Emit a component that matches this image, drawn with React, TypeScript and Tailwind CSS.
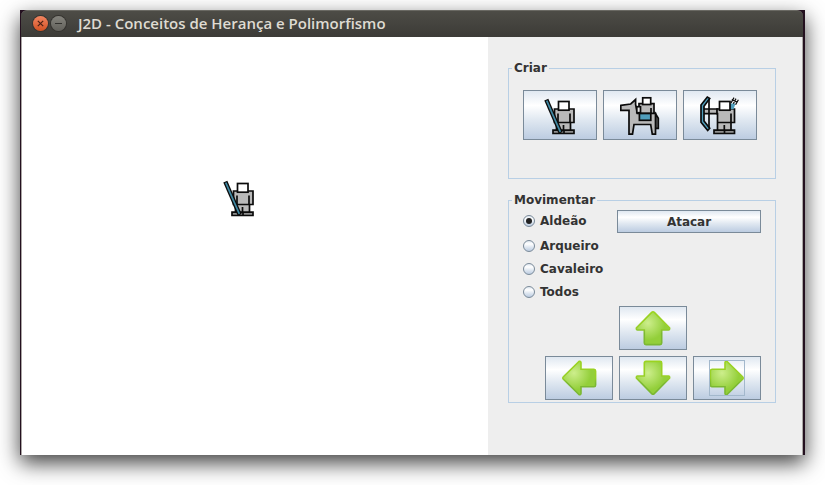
import { useState } from "react";
import type { ReactNode } from "react";

const INK = "#0b0b0b";
const BODY = "#b9b9b9";
const BLUE = "#4f9dbb";

function VillagerSprite() {
  return (
    <svg className="h-10 w-10" viewBox="0 0 40 40" stroke={INK} strokeWidth="1.7" aria-hidden="true">
      <path d="M14.5 14H34V27.5H30.5V36H16.5V27.5H14.5Z" fill={BODY} />
      <path d="M18 18.5V27.5M30 18.5V27.5M16.5 27.5H30.5M23.5 30V36" fill="none" />
      <path d="M13 35.2H34V38.5H13ZM24 35V38.5" fill="#8f8f8f" />
      <rect x="18.5" y="6.5" width="10.5" height="8.7" fill="#fff" />
      <path d="M6.3 4.7L20.7 37.8" fill="none" strokeWidth="4.4" />
      <path d="M6.7 5.6L20.3 36.8" fill="none" stroke="#3f88a3" strokeWidth="1.7" />
    </svg>
  );
}

function KnightSprite() {
  return (
    <svg className="h-10 w-10" viewBox="0 0 40 40" stroke={INK} strokeWidth="1.7" aria-hidden="true">
      <path d="M35.5 18.7L38.3 23.3V33.3H35.5Z" fill="#777" />
      <path d="M19 8.7H34V19H19Z" fill={BODY} />
      <path
        d="M.8 10.4L10.7 9L15.6 4.5V9.5L17.3 18.3H35.5V39.2H32.3L30.7 29.5H14L12.5 39.2H9V15.3H.8Z"
        fill={BODY}
      />
      <path d="M31 13V18.5" fill="none" />
      <rect x="16.8" y="11.7" width="3.7" height="6" fill="#e8e8e8" />
      <rect x="19.4" y="18.5" width="11.4" height="6.8" fill={BLUE} />
      <rect x="22.7" y="2.8" width="8" height="6.7" fill="#fff" />
    </svg>
  );
}

function ArcherSprite() {
  return (
    <svg className="h-10 w-10" viewBox="0 0 40 40" stroke={INK} strokeWidth="1.7" aria-hidden="true">
      <path d="M2.5 14H17.5V18.7H2.5Z" fill={BODY} />
      <path d="M17 14H34.5V27.5H31V36H17.5V18.7H17Z" fill={BODY} />
      <path d="M17.5 27.5H31M31 18.5V27.5M24.3 30V36" fill="none" />
      <path d="M14 35.2H34.5V38.5H14ZM24.5 35V38.5" fill="#8f8f8f" />
      <path d="M30 8.5H35.5L33.5 14.2H30Z" fill={BLUE} stroke="none" />
      <path d="M31 8L34 2.6M33.3 8.8L36 3.6M35.6 9.8L38.4 4.8M31.8 4.4L37.5 7.6" fill="none" strokeWidth="1.2" />
      <rect x="19.5" y="6.5" width="10.5" height="8.7" fill="#fff" />
      <path d="M9 3V34" fill="none" />
      <path d="M9.7 3.5L7.3 2L1 10V27.3L7.7 35.5L9.7 33.3L4 26V11.3Z" fill={BLUE} />
    </svg>
  );
}

const ARROWS = {
  up: "M18 1.8Q18.7 1.8 19.3 2.4L34.6 18Q35 19.8 33.4 20H26.7V33Q26.7 34.6 25 34.6H11Q9.3 34.6 9.3 33V20H2.6Q1 19.8 1.4 18L16.7 2.4Q17.3 1.8 18 1.8Z",
  down: "M18 34.2Q17.3 34.2 16.7 33.6L1.4 18Q1 16.2 2.6 16H9.3V3Q9.3 1.4 11 1.4H25Q26.7 1.4 26.7 3V16H33.4Q35 16.2 34.6 18L19.3 33.6Q18.7 34.2 18 34.2Z",
  left: "M1.8 18Q1.8 17.3 2.4 16.7L18 1.4Q19.8 1 20 2.6V9.3H33Q34.6 9.3 34.6 11V25Q34.6 26.7 33 26.7H20V33.4Q19.8 35 18 34.6L2.4 19.3Q1.8 18.7 1.8 18Z",
  right:
    "M34.2 18Q34.2 18.7 33.6 19.3L18 34.6Q16.2 35 16 33.4V26.7H3Q1.4 26.7 1.4 25V11Q1.4 9.3 3 9.3H16V2.6Q16.2 1 18 1.4L33.6 16.7Q34.2 17.3 34.2 18Z",
};

type Direction = keyof typeof ARROWS;

function ArrowIcon({ direction }: { direction: Direction }) {
  const fill = `fill-${direction}`;
  const edge = `edge-${direction}`;
  return (
    <svg className="h-9 w-9" viewBox="0 0 36 36" aria-hidden="true">
      <defs>
        <radialGradient id={fill} gradientUnits="userSpaceOnUse" cx="13" cy="13" r="17">
          <stop offset="0" stopColor="#cdee8c" />
          <stop offset="1" stopColor="#93cf3a" />
        </radialGradient>
        <linearGradient id={edge} gradientUnits="userSpaceOnUse" x1="0" y1="0" x2="0" y2="36">
          <stop offset="0" stopColor="#9bd41f" />
          <stop offset="0.5" stopColor="#98cf28" />
          <stop offset="0.65" stopColor="#7bb833" />
          <stop offset="1" stopColor="#7bb833" />
        </linearGradient>
      </defs>
      <path d={ARROWS[direction]} fill={`url(#${fill})`} stroke={`url(#${edge})`} strokeWidth="1.6" />
    </svg>
  );
}

const BEVEL =
  "flex items-center justify-center border border-[#7a8a99] bg-[linear-gradient(#e0e8f1,#ffffff_30%,#e0e8f1_60%,#bccce1)] outline-none";

function CreateButton({ label, children }: { label: string; children: ReactNode }) {
  return (
    <button type="button" aria-label={label} className={`${BEVEL} h-[50px] w-[74px]`}>
      {children}
    </button>
  );
}

function MoveButton({ label, direction, className = "" }: { label: string; direction: Direction; className?: string }) {
  return (
    <button type="button" aria-label={label} className={`${BEVEL} h-11 w-[68px] ${className}`}>
      <span className={direction === "right" ? "outline outline-1 -outline-offset-1 outline-[#a3b8cc]" : ""}>
        <ArrowIcon direction={direction} />
      </span>
    </button>
  );
}

function UnitRadio({ label, checked, onSelect }: { label: string; checked: boolean; onSelect: () => void }) {
  return (
    <label className="flex h-[23px] items-center gap-[5px] pb-0.5">
      <input
        type="radio"
        name="unit"
        checked={checked}
        onChange={onSelect}
        className="grid h-3 w-3 appearance-none place-items-center rounded-full border border-[#7a8a99] bg-[linear-gradient(#e0e8f1,#ffffff_30%,#e0e8f1_60%,#bccce1)] before:h-1.5 before:w-1.5 before:rounded-full checked:before:bg-[#222]"
      />
      {label}
    </label>
  );
}

export default function App() {
  const [unit, setUnit] = useState("Aldeão");

  return (
    <div className="flex min-h-screen flex-col bg-white px-5 pt-2.5 pb-[30px]">
      <div className="flex flex-1 flex-col border-r-2 border-l border-[#24101f] bg-[#24101f] shadow-[0_8px_20px_rgba(0,0,0,0.75)]">
        <header className="flex h-[27px] items-center rounded-t-md border-t border-[#6a6963] bg-linear-to-b from-[#4d4c46] to-[#3c3b37] pb-0.5 pl-3">
          <div className="flex gap-[3px]">
            <button
              type="button"
              aria-label="Fechar"
              className="flex h-[15px] w-[15px] items-center justify-center rounded-full bg-linear-to-b from-[#f18560] to-[#d1501f] ring-1 ring-[#35332f]"
            >
              <svg className="h-[7px] w-[7px]" viewBox="0 0 7 7" stroke="#4a2014" strokeWidth="1.2" aria-hidden="true">
                <path d="M.8 .8L6.2 6.2M6.2 .8L.8 6.2" />
              </svg>
            </button>
            <button
              type="button"
              aria-label="Minimizar"
              className="flex h-[15px] w-[15px] items-center justify-center rounded-full bg-linear-to-b from-[#85847d] to-[#62615b] ring-1 ring-[#35332f]"
            >
              <span className="h-px w-[7px] bg-[#33322e]" />
            </button>
          </div>
          <h1 className="ml-3 font-['Open_Sans',sans-serif] text-[15px] leading-5 font-semibold whitespace-nowrap text-[#dfdbd2]">
            J2D - Conceitos de Herança e Polimorfismo
          </h1>
        </header>

        <div className="flex flex-1 border-x border-[#aaa6a4]">
          <main className="relative flex-1 bg-white">
            <div className="absolute top-[140px] left-[197px]">
              <VillagerSprite />
            </div>
          </main>

          <aside className="flex w-[314px] flex-col gap-3.5 bg-[#eeeeee] pt-6 pr-[26px] pl-5 font-['DejaVu_Sans',sans-serif] text-xs font-bold text-[#333]">
            <fieldset className="border border-[#b8cfe5] px-3.5 pt-3.5 pb-[38px]">
              <legend className="-ml-[11px] px-0.5 leading-[15px]">Criar</legend>
              <div className="flex gap-1.5">
                <CreateButton label="Criar aldeão">
                  <VillagerSprite />
                </CreateButton>
                <CreateButton label="Criar cavaleiro">
                  <KnightSprite />
                </CreateButton>
                <CreateButton label="Criar arqueiro">
                  <ArcherSprite />
                </CreateButton>
              </div>
            </fieldset>

            <fieldset className="border border-[#b8cfe5] px-3.5 py-0.5">
              <legend className="-ml-[11px] px-0.5 leading-[15px]">Movimentar</legend>
              <div className="mb-0.5 flex items-center justify-between">
                <UnitRadio label="Aldeão" checked={unit === "Aldeão"} onSelect={() => setUnit("Aldeão")} />
                <button type="button" className={`${BEVEL} h-[23px] w-36`}>
                  Atacar
                </button>
              </div>
              {["Arqueiro", "Cavaleiro", "Todos"].map((name) => (
                <UnitRadio key={name} label={name} checked={unit === name} onSelect={() => setUnit(name)} />
              ))}
              <div className="mt-0.5 grid grid-cols-[repeat(3,68px)] justify-end gap-1.5">
                <MoveButton label="Mover para cima" direction="up" className="col-start-2" />
                <MoveButton label="Mover para a esquerda" direction="left" className="col-start-1" />
                <MoveButton label="Mover para baixo" direction="down" />
                <MoveButton label="Mover para a direita" direction="right" />
              </div>
            </fieldset>
          </aside>
        </div>
      </div>
    </div>
  );
}
